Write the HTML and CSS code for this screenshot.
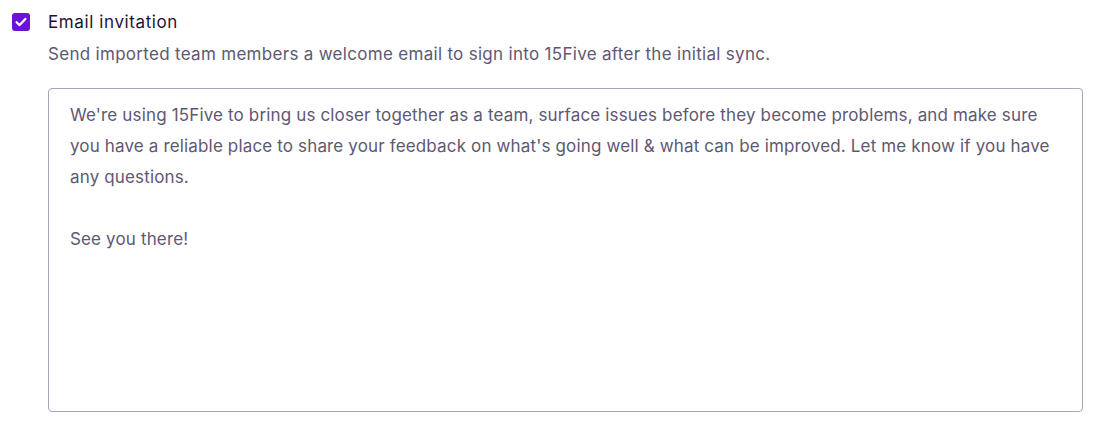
FILE: index.html
```html
<!DOCTYPE html>
<html>
<head>
<meta charset="utf-8">
<link rel="stylesheet" href="styles.css">
</head>
<body>
<div class="field">
  <div class="check-row">
    <span class="checkbox">
      <svg width="14" height="14" viewBox="0 0 14 14"><path d="M2.6 7.2 L5.6 10.1 L11.4 3.9" fill="none" stroke="#fff" stroke-width="2.2" stroke-linecap="round" stroke-linejoin="round"/></svg>
    </span>
    <span class="label">Email invitation</span>
  </div>
  <div class="body">
    <p class="desc">Send imported team members a welcome email to sign into 15Five after the initial sync.</p>
    <div class="textarea">
      <p>We're using 15Five to bring us closer together as a team, surface issues before they become problems, and make sure you have a reliable place to share your feedback on what's going well &amp; what can be improved. Let me know if you have any questions.</p>
      <p>See you there!</p>
    </div>
  </div>
</div>
</body>
</html>
```
FILE: styles.css
```css
* { box-sizing: border-box; }
body {
  margin: 0;
  background: #fff;
  font-family: Inter, "Liberation Sans", sans-serif;
  width: 1096px;
  height: 426px;
  overflow: hidden;
}
.field {
  padding: 11px 13px 0 12px;
}
.check-row {
  display: flex;
  align-items: center;
  gap: 18px;
  height: 21px;
}
.checkbox {
  width: 18px;
  height: 18px;
  border-radius: 3px;
  background: #6b14d8;
  display: flex;
  align-items: center;
  justify-content: center;
}
.label {
  font-size: 17px;
  color: #1d1533;
  letter-spacing: 0.6px;
}
.body {
  padding-left: 36px;
}
.desc {
  margin: 11px 0 0;
  font-size: 17px;
  line-height: 22px;
  color: #5e5873;
  letter-spacing: 0.3px;
}
.textarea {
  margin-top: 23px;
  height: 324px;
  border: 1px solid #a9a3ba;
  border-radius: 4px;
  padding: 11px 26px 11px 21px;
  font-size: 17px;
  line-height: 31px;
  color: #5e5873;
  letter-spacing: 0.15px;
}
.textarea p {
  margin: 0 0 31px;
}
```
